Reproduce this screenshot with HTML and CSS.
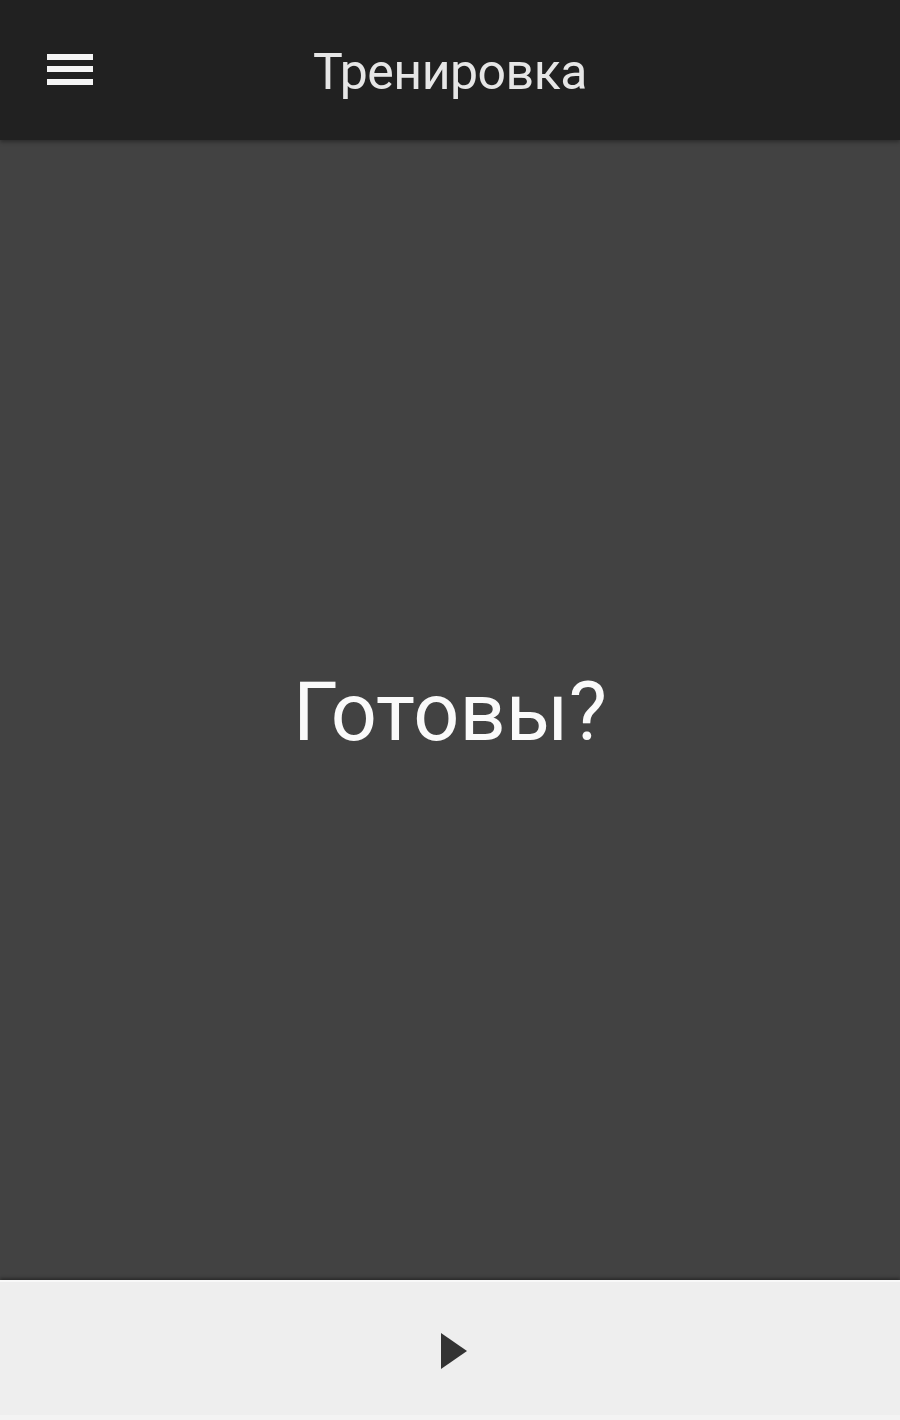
FILE: index.html
```html
<!DOCTYPE html>
<html lang="ru">
<head>
<meta charset="utf-8">
<title>Тренировка</title>
<link rel="stylesheet" href="styles.css">
</head>
<body>
<div class="app">
  <header class="topbar">
    <button class="menu-btn" aria-label="Меню">
      <svg width="46" height="32" viewBox="0 0 46 32"><rect x="0" y="1" width="46" height="6" fill="#f5f5f5"/><rect x="0" y="13" width="46" height="6" fill="#f5f5f5"/><rect x="0" y="26" width="46" height="6" fill="#f5f5f5"/></svg>
    </button>
    <h1 class="title">Тренировка</h1>
  </header>
  <main class="stage">
    <div class="prompt">Готовы?</div>
  </main>
  <footer class="controls">
    <button class="play-btn" aria-label="Старт">
      <svg width="30" height="38" viewBox="0 0 30 38"><path d="M2 1 L28 19 L2 37 Z" fill="#333"/></svg>
    </button>
  </footer>
</div>
</body>
</html>
```
FILE: styles.css
```css
html, body {
  margin: 0;
  padding: 0;
  background: #424242;
}
body {
  font-family: Roboto, "Noto Sans", sans-serif;
}
.app {
  display: flex;
  flex-direction: column;
  height: 1420px;
  width: 900px;
}
.topbar {
  height: 140px;
  flex: 0 0 140px;
  background: #212121;
  display: flex;
  align-items: center;
  justify-content: center;
  position: relative;
  box-shadow: 0 2px 4px rgba(0,0,0,0.35);
  z-index: 2;
}
.menu-btn {
  position: absolute;
  left: 47px;
  top: 53px;
  padding: 0;
  margin: 0;
  border: 0;
  background: none;
  display: block;
  line-height: 0;
}
.title {
  margin: 0;
  font-weight: 400;
  font-size: 50px;
  color: #e6e6e6;
  letter-spacing: -0.5px;
  line-height: 1;
  transform: translateY(2px);
}
.stage {
  flex: 1;
  background: #424242;
  display: flex;
  align-items: center;
  justify-content: center;
}
.prompt {
  font-size: 81px;
  color: #fafafa;
  line-height: 1;
  transform: translateY(2px);
}
.controls {
  flex: 0 0 140px;
  height: 140px;
  box-sizing: border-box;
  background: #eeeeee;
  border-top: 2px solid #f8f8f8;
  border-bottom: 5px solid #f3f3f3;
  box-shadow: 0 -2px 3px rgba(0,0,0,0.35);
  display: flex;
  align-items: center;
  justify-content: center;
}
.play-btn {
  padding: 0;
  margin: 0 0 0 8px;
  border: 0;
  background: none;
  line-height: 0;
  transform: translateY(2px);
}
```
